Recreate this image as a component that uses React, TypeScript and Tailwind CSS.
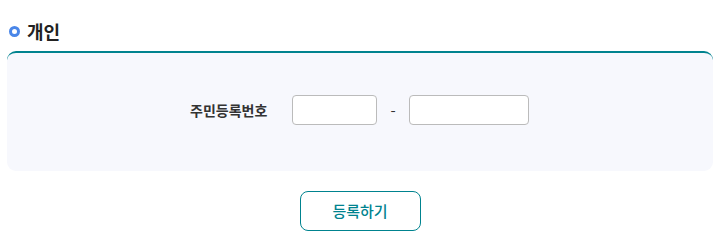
export default function App() {
  return (
    <div className="w-[724px] h-[251px] bg-white font-['Noto_Sans_CJK_KR','Noto_Sans',sans-serif] text-[#222]">
      <div className="flex items-center gap-[7px] pl-[9px] pt-[19px] h-[51px] pb-[8px]">
        <span className="inline-block size-[11px] rounded-full border-[3px] border-[#4a86e8]" />
        <h2 className="text-[18px] font-bold leading-none">개인</h2>
      </div>
      <div className="ml-[7px] mr-[11px] h-[120px] rounded-[9px] border-t-2 border-[#00838f] bg-[#f7f8fd] flex items-center pl-[183px] pb-[4px]">
        <span className="text-[14px] font-bold text-[#333] w-[102px]">주민등록번호</span>
        <input className="w-[85px] h-[30px] rounded-[4px] border border-[#bbb] bg-white" />
        <span className="w-[32px] text-center text-[15px] text-[#333]">-</span>
        <input className="w-[120px] h-[30px] rounded-[4px] border border-[#bbb] bg-white" />
      </div>
      <div className="flex justify-center pt-[20px] ml-[7px] mr-[11px]">
        <button
          type="button"
          className="w-[121px] h-[40px] rounded-[8px] border border-[#00838f] text-[#00838f] text-[15px] font-medium bg-white"
        >
          등록하기
        </button>
      </div>
    </div>
  );
}
